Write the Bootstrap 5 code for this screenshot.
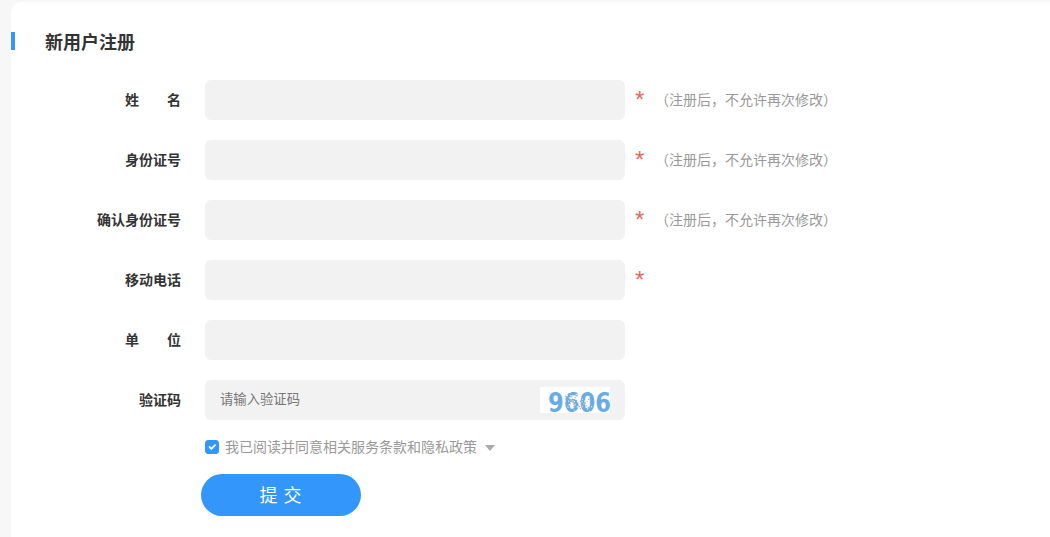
<!DOCTYPE html>
<html lang="zh">
<head>
<meta charset="utf-8">
<title>新用户注册</title>
<link href="https://cdn.jsdelivr.net/npm/bootstrap@5.3.0/dist/css/bootstrap.min.css" rel="stylesheet">
<style>
html,body{height:100%;}
body{background:#f7f7f7;font-family:"Noto Sans CJK SC","Liberation Sans",sans-serif;overflow:hidden;padding:2px 0 0 11px;}
.reg-panel{background:#fff;border-radius:10px 0 0 0;height:535px;padding-top:30px;}
.reg-title{border-left:4px solid #3296fa;height:18px;padding-left:30px;font-size:18px;line-height:18px;font-weight:700;color:#333;margin-bottom:30px;}
.reg-row{height:40px;margin-bottom:20px;}
.reg-label{width:170px;text-align:right;font-size:14px;font-weight:700;color:#333;flex:none;margin-bottom:2px;}
.reg-spread{display:inline-flex;justify-content:space-between;width:56px;}
.reg-field{width:420px;height:40px;margin-left:24px;flex:none;position:relative;}
.reg-input{height:40px;background:#f2f2f2;border:0;border-radius:6px;padding:0 15px 3px;font-size:13.33px;color:#333;}
.reg-input:focus{background:#f2f2f2;box-shadow:none;}
.reg-input::placeholder{color:#777;opacity:1;}
.reg-star{color:#e8685c;font-size:24px;line-height:22px;margin-left:10px;width:28px;flex:none;height:22px;font-family:"Liberation Sans",sans-serif;}
.reg-hint{color:#999;font-size:14px;margin-left:-8px;margin-bottom:2px;}
.reg-captcha{position:absolute;right:15px;top:7px;width:70px;height:26px;background:#fff;overflow:visible;}
.reg-agree{margin-left:194px;height:14px;margin-top:-1px;font-size:14px;color:#999;}
.reg-agree .form-check-input{width:14px;height:14px;margin:2px 6px 0 0;border-radius:3px;background-color:#3296fa;border-color:#3296fa;flex:none;}
.reg-caret{width:0;height:0;border-left:5px solid transparent;border-right:5px solid transparent;border-top:6px solid #aaa;margin-left:8px;margin-top:3px;}
.reg-submit{display:block;width:160px;height:42px;margin:21px 0 0 190px;border-radius:21px;background:#3296fa;border:0;color:#fff;font-size:18px;line-height:40px;padding:0 0 2px;letter-spacing:1px;}
.reg-submit:hover{background:#3296fa;color:#fff;}
</style>
</head>
<body>
<div class="reg-panel">
  <div class="reg-title">新用户注册</div>
  <form>
    <div class="reg-row d-flex align-items-center">
      <label class="reg-label"><span class="reg-spread"><span>姓</span><span>名</span></span></label>
      <div class="reg-field"><input class="form-control reg-input" type="text" aria-label="姓名"></div>
      <span class="reg-star">*</span><span class="reg-hint">（注册后，不允许再次修改）</span>
    </div>
    <div class="reg-row d-flex align-items-center">
      <label class="reg-label">身份证号</label>
      <div class="reg-field"><input class="form-control reg-input" type="text" aria-label="身份证号"></div>
      <span class="reg-star">*</span><span class="reg-hint">（注册后，不允许再次修改）</span>
    </div>
    <div class="reg-row d-flex align-items-center">
      <label class="reg-label">确认身份证号</label>
      <div class="reg-field"><input class="form-control reg-input" type="text" aria-label="确认身份证号"></div>
      <span class="reg-star">*</span><span class="reg-hint">（注册后，不允许再次修改）</span>
    </div>
    <div class="reg-row d-flex align-items-center">
      <label class="reg-label">移动电话</label>
      <div class="reg-field"><input class="form-control reg-input" type="text" aria-label="移动电话"></div>
      <span class="reg-star">*</span>
    </div>
    <div class="reg-row d-flex align-items-center">
      <label class="reg-label"><span class="reg-spread"><span>单</span><span>位</span></span></label>
      <div class="reg-field"><input class="form-control reg-input" type="text" aria-label="单位"></div>
    </div>
    <div class="reg-row d-flex align-items-center">
      <label class="reg-label">验证码</label>
      <div class="reg-field">
        <input class="form-control reg-input" type="text" placeholder="请输入验证码">
        <svg class="reg-captcha" viewBox="0 0 70 26" aria-label="9606">
          <text x="8" y="25" font-family="DejaVu Sans" font-weight="700" font-size="27" fill="#6aabe6" textLength="63" lengthAdjust="spacingAndGlyphs">9606</text>
          <path d="M25 6L40 23M26 23L38 5M38 10L50 25M39 25L50 8M30 5L35 25M25 14L40 15M42 12L52 20M28 18L38 10" stroke="#fff" stroke-width="1.2" stroke-dasharray="1 2" fill="none"/>
          <path d="M25 9L40 20M26 20L38 8M40 14L50 22M40 22L50 11M31 7L35 24" stroke="#93a5b8" stroke-width="1.2" stroke-dasharray="1 1.5" fill="none"/>
        </svg>
      </div>
    </div>
    <div class="reg-agree d-flex align-items-center">
      <input class="form-check-input" type="checkbox" checked aria-label="同意">
      <span>我已阅读并同意相关服务条款和隐私政策</span>
      <span class="reg-caret"></span>
    </div>
    <button type="button" class="btn reg-submit">提 交</button>
  </form>
</div>
<script src="https://cdn.jsdelivr.net/npm/bootstrap@5.3.0/dist/js/bootstrap.bundle.min.js"></script>
</body>
</html>
